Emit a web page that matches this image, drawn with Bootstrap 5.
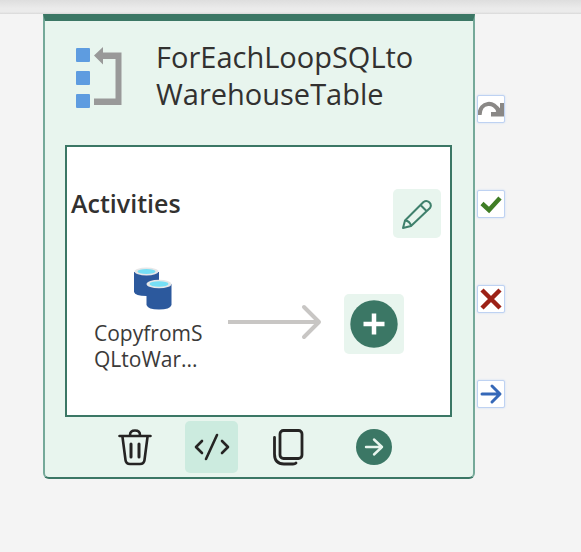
<!DOCTYPE html>
<html lang="en">
<head>
<meta charset="utf-8">
<meta name="viewport" content="width=device-width, initial-scale=1">
<title>Pipeline canvas</title>
<link href="https://cdn.jsdelivr.net/npm/bootstrap@5.3.0/dist/css/bootstrap.min.css" rel="stylesheet">
<style>
  body { background: #f4f4f4; color: #252423; font-family: "Open Sans", "Noto Sans", sans-serif; }
  .top-strip { height: 14px; background: linear-gradient(#dedede, #ebebeb 60%, #ebebeb 85%, #d8d8d8); }
  .canvas { padding: 0 76px 0 43px; gap: 2px; }
  .activity { background: #e8f5ee; border: 2px solid #3b7765; border-top-width: 7px; border-left-color: #75a999; border-right-color: #75a999; border-radius: 0 0 6px 6px; min-width: 0; }
  .activity-head { padding: 17px 30px 0 31px; gap: 34px; height: 124px; }
  .activity-title { font-size: 29px; line-height: 37px; font-weight: 400; margin: 0; color: #323130; }
  .inner { background: #fff; border: 2px solid #3b7765; margin: 0 21px 0 20px; height: 272px; }
  .inner-head { padding: 42px 9px 0 4px; }
  .inner-title { font-size: 25px; line-height: 28px; font-weight: 600; margin: 0; color: #323130; }
  .tile { border: 0; padding: 0; background: #e8f5ee; border-radius: 5px; display: flex; align-items: center; justify-content: center; }
  .tile-edit { width: 48px; height: 49px; }
  .tile-add { width: 60px; height: 60px; margin: 27px 0 0 22px; }
  .flow { padding: 29px 0 0 27px; }
  .step { width: 114px; margin-right: 20px; }
  .step-icon { margin-left: 40px; }
  .step-name { font-size: 21px; line-height: 26px; margin-top: 10px; color: #3b3a39; }
  .flow-arrow { margin-top: 37px; }
  .tools { padding: 4px 81px 4px 72px; }
  .tool-group { gap: 32px; }
  .tool { width: 36px; height: 52px; background: transparent; }
  .tool-code { width: 53px; background: #ccebdf; }
  .ports { padding-top: 81px; gap: 67px; }
  .port { width: 28px; height: 28px; background: #fff; border: 1px solid #bed2f2; border-radius: 2px; box-shadow: 0 0 2px #c5d7f3; padding: 0; display: flex; align-items: center; justify-content: center; }
  svg { display: block; flex: none; }
</style>
<script src="https://cdn.jsdelivr.net/npm/bootstrap@5.3.0/dist/js/bootstrap.bundle.min.js"></script>
</head>
<body>
<div class="top-strip"></div>
<main class="canvas d-flex align-items-start">
  <section class="activity flex-grow-1">
    <header class="activity-head d-flex align-items-start">
      <svg class="mt-2" width="46" height="62" viewBox="0 0 46 62" aria-hidden="true">
        <g fill="#5e9ce0"><rect y="2" width="14" height="14" rx="1"/><rect y="25" width="14" height="14" rx="1"/><rect y="48" width="14" height="14" rx="1"/></g>
        <path d="M18 9.500 27 1V6.500H45.500V59H18V52.500H39.500V13H27V18.500Z" fill="#999"/>
      </svg>
      <h1 class="activity-title">ForEachLoopSQLto<br>WarehouseTable</h1>
    </header>
    <div class="inner">
      <div class="inner-head d-flex justify-content-between">
        <h2 class="inner-title">Activities</h2>
        <button class="tile tile-edit" type="button" aria-label="Edit activities">
          <svg width="32" height="32" viewBox="0 0 32 32" fill="none" stroke="#3f806c" stroke-width="2" stroke-linejoin="round"><path d="M2 30 4 22.500 22.500 4A4.500 4.500 0 0 1 29 10L10 28Z M19.500 7 26 13.500M4 22.500Q9 23 10 28"/></svg>
        </button>
      </div>
      <div class="flow d-flex align-items-start">
        <div class="step">
          <svg class="step-icon" width="38" height="43" viewBox="0 0 38 43" aria-hidden="true">
            <path d="M0 5V25Q1 29 12.500 29T25 25V5Z" fill="#2c599d"/>
            <ellipse cx="12.500" cy="4.500" rx="12" ry="4" fill="#e6e7e8"/><ellipse cx="12.500" cy="4.500" rx="9" ry="2.500" fill="#76dff5"/>
            <path d="M12.500 17V38Q14 42.500 25 42.500T37.500 38V17Z" fill="#2c599d"/>
            <ellipse cx="25" cy="17" rx="12.500" ry="4.300" fill="#e6e7e8"/><ellipse cx="25" cy="17" rx="9.500" ry="2.700" fill="#76dff5"/>
          </svg>
          <div class="step-name">CopyfromS<br>QLtoWar...</div>
        </div>
        <svg class="flow-arrow" width="94" height="36" viewBox="0 0 94 36" fill="none" stroke="#c8c6c4" stroke-width="4" stroke-linejoin="round" aria-hidden="true"><path d="M0 18H90"/><path d="M76 3 91 18 76 33" stroke-linecap="round"/></svg>
        <button class="tile tile-add" type="button" aria-label="Add activity">
          <svg width="48" height="48" viewBox="0 0 48 48"><circle cx="24" cy="24" r="23.700" fill="#3b7765"/><path d="M13.500 24H34.500M24 13.500V34.500" stroke="#fff" stroke-width="4.500"/></svg>
        </button>
      </div>
    </div>
    <div class="tools d-flex justify-content-between">
      <div class="tool-group d-flex">
        <button class="tile tool" type="button" aria-label="Delete">
          <svg width="34" height="37" viewBox="0 0 34 37" fill="none" stroke="#252423" stroke-width="2.600" stroke-linecap="round"><path d="M1.500 7H32.500M12 6Q12 1.500 17 1.500T22 6M4.500 8 7.500 31Q8 35 12 35H22Q26 35 26.500 31L29.500 8"/><path d="M13 15V28M21 15V28" stroke-width="3"/></svg>
        </button>
        <button class="tile tool tool-code" type="button" aria-label="View code">
          <svg width="36" height="28" viewBox="0 0 36 28" fill="none" stroke="#252423" stroke-width="2.600" stroke-linecap="round" stroke-linejoin="round"><path d="M8 8 2 14 8 20M28 8 34 14 28 20M23 2 12 26"/></svg>
        </button>
        <button class="tile tool" type="button" aria-label="Copy">
          <svg width="32" height="37" viewBox="0 0 32 37" fill="none" stroke="#252423" stroke-width="2.800" stroke-linecap="round"><rect x="8" y="1.500" width="22" height="28" rx="3.500"/><path d="M2.500 8.500V25Q2.500 35 12 35H21Q23 35 24 34"/></svg>
        </button>
      </div>
      <button class="tile tool" type="button" aria-label="Run">
        <svg width="36" height="36" viewBox="0 0 36 36" fill="none"><circle cx="18" cy="18" r="18" fill="#3b7765"/><path d="M10 18H26M18 10.500 26 18 18 25.500" stroke="#e8f5ee" stroke-width="2.400" stroke-linecap="round" stroke-linejoin="round"/></svg>
      </button>
    </div>
  </section>
  <nav class="ports d-flex flex-column" aria-label="Activity outputs">
    <button class="port" type="button" aria-label="On skip"><svg width="26" height="26" viewBox="0 0 26 26"><path d="M1.500 19C2 5 17 5 20.500 15" fill="none" stroke="#8a8886" stroke-width="4.200"/><path d="M26 7V20.500H13V16H17.500L22 11.500V7Z" fill="#8a8886"/></svg></button>
    <button class="port" type="button" aria-label="On success"><svg width="26" height="26" viewBox="0 0 26 26" fill="none" stroke="#3f7d25" stroke-width="4.500"><path d="M4 12.500 11 19 22 7"/></svg></button>
    <button class="port" type="button" aria-label="On fail"><svg width="26" height="26" viewBox="0 0 26 26" fill="none" stroke="#9c2116" stroke-width="4.500"><path d="M4 4 22 22M22 4 4 22"/></svg></button>
    <button class="port" type="button" aria-label="On completion"><svg width="26" height="26" viewBox="0 0 26 26" fill="none" stroke="#3568b8" stroke-width="3" stroke-linecap="round"><path d="M4 13H21.500M14 5 22 13 14 21" stroke-linejoin="round"/></svg></button>
  </nav>
</main>
</body>
</html>
